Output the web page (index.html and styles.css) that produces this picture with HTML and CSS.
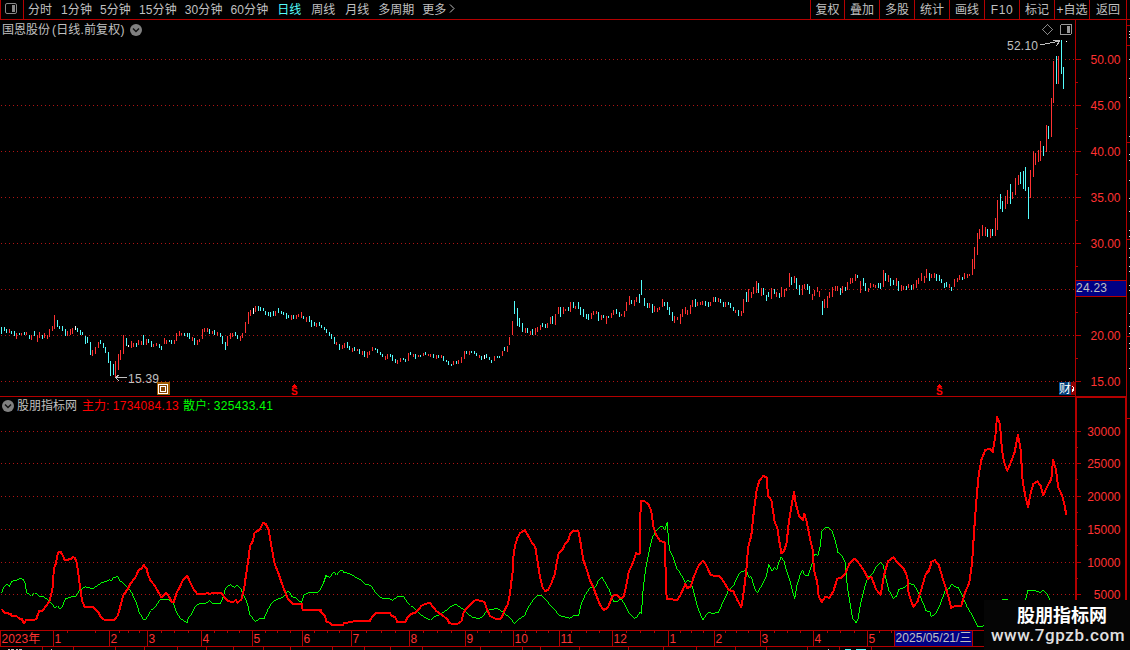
FILE: index.html
```html
<!DOCTYPE html>
<html lang="zh-CN">
<head>
  <meta charset="UTF-8" />
  <meta name="viewport" content="width=device-width, initial-scale=1" />
  <title>国恩股份 日线</title>
  <link rel="stylesheet" href="styles.css">
</head>
<body>
  <div class="toolbar">
    <div class="panel-toggle">
      <svg width="12" height="11" viewBox="0 0 12 11"><rect x=".5" y=".5" width="11" height="10" rx="1.5" fill="none" stroke="#888"/><rect x="7" y="2" width="3" height="7" fill="#888"/></svg>
    </div>
    <nav class="periods">
      <a>分时</a><a>1分钟</a><a>5分钟</a><a class="m15">15分钟</a><a>30分钟</a><a>60分钟</a><a class="active">日线</a><a class="week">周线</a><a class="month">月线</a><a>多周期</a><a>更多</a>
      <svg class="more" width="6" height="9" viewBox="0 0 6 9"><path d="M1 .5 L5 4.5 L1 8.5" fill="none" stroke="#c0c0c0"/></svg>
    </nav>
    <nav class="actions">
      <a>复权</a><a>叠加</a><a>多股</a><a>统计</a><a>画线</a><a class="f10">F10</a><a>标记</a><a>+自选</a><a class="back">返回</a>
    </nav>
  </div>

  <div class="pane price">
    <svg class="plot" width="1075" height="377" viewBox="0 20 1075 377">
      <g class="grid" id="priceGrid"></g>
      <path id="up" class="up" />
      <path id="down" class="down" />
      <path id="flat" class="flat" />

      <!-- high / low markers -->
      <text class="mark" x="1007" y="50" textLength="31">52.10</text>
      <path class="arrow" d="M1040 45 L1050 43 L1060 41 M1053 40 L1060 41 L1056 46" />
      <rect x="1066" y="41" width="1" height="1" fill="#fff" />
      <text class="mark" x="128" y="383" textLength="31">15.39</text>
      <path class="arrow" d="M127 377.5 H116 M119 375 L115.500 377.500 L119 381" />

      <!-- corner buttons -->
      <path d="M1042.500 29.500 L1047.500 24.500 L1052.500 29.500 L1047.500 34.500 Z" fill="none" stroke="#888" />
      <rect x="1060.500" y="24.500" width="11" height="10" rx="1.500" fill="none" stroke="#999" />
      <rect x="1067" y="26" width="3" height="7" fill="#999" />

      <!-- event marks -->
      <rect x="157" y="382" width="13" height="13" fill="#a05a00" />
      <rect x="158.500" y="384.500" width="9" height="9" fill="#844200" stroke="#fff" />
      <rect x="160.500" y="386.500" width="5" height="5" fill="none" stroke="#fff" />
      <g class="dividend">
        <path d="M292 387 h5 v-1 h-1 v-1 h-1 v-1 h-1 v1 h-1 v1 h-1z" />
        <text x="291" y="395">S</text>
        <path d="M937 387 h5 v-1 h-1 v-1 h-1 v-1 h-1 v1 h-1 v1 h-1z" />
        <text x="936" y="395">S</text>
      </g>
      <rect x="1059" y="382" width="12" height="13" fill="#003c78" />
      <rect x="1071" y="382" width="4" height="13" fill="#8c0000" />
      <text class="tag" x="1059" y="393">财</text>
      <path d="M1072 386 l2 2 l-2 2 M1074 389 l-2 3" fill="none" stroke="#fff" />
      <rect class="line" x="0" y="396" width="1075" height="1" />
    </svg>
    <svg class="axis" width="55" height="377" viewBox="1075 20 55 377">
      <g class="line" id="priceTicks">
        <rect x="1075" y="20" width="1" height="377" />
        <rect x="1126" y="20" width="1" height="377" />
        <rect x="1075" y="396" width="52" height="1" />
      </g>
      <g class="ylabels" id="priceLabels"></g>
      <rect x="1076" y="280" width="50" height="17" fill="#000084" />
      <rect class="line" x="1075" y="280" width="52" height="1" />
      <rect class="line" x="1075" y="296" width="52" height="1" />
      <text class="current" x="1076" y="292" textLength="31">24.23</text>
    </svg>
    <div class="caption title">
      <span>国恩股份</span><span class="sub">(日线.前复权)</span>
      <svg width="12" height="12" viewBox="0 0 12 12"><circle cx="6" cy="6" r="6" fill="#808080"/><path d="M3 4.500 L6 7.500 L9 4.500" fill="none" stroke="#111" stroke-width="1.500"/></svg>
    </div>
  </div>

  <div class="pane volume">
    <svg class="plot" width="1075" height="233" viewBox="0 397 1075 233">
      <g class="grid" id="flowGrid"></g>
      <g class="retail">
        <path transform="translate(0 510) scale(.33333)" d="M4 250L10 235L20 222L28 230L36 214L50 210L62 205L70 208L76 222L79 246L94 259L104 248L118 258L132 260L145 272L155 280L164 293L172 287L180 296L188 288L196 267L210 262L228 258L240 240L256 230L278 237L290 228L306 218L324 212L328 208L333 214L340 203L354 200L360 212L374 224L388 236L396 250L408 276L418 308L430 328L438 328L452 302L466 290L480 270L490 267L506 270L520 278L530 308L542 326L561 338L566 322L576 310L586 290L598 280L618 280L629 271L638 282L660 282L670 260L676 236L690 224L704 232L712 226L722 236L734 262L742 280L750 315L766 334L782 325L792 326L804 298L816 278L830 268L848 262L865 242L876 260L888 264L904 278L912 254L926 248L956 246L968 226L978 198L990 202" />
        <path transform="translate(320 510) scale(.33333)" d="M0 241L8 225L18 196L28 202L42 187L50 196L58 184L67 179L72 188L88 190L104 200L126 212L136 222L152 226L164 244L178 260L192 266L208 266L218 271L232 260L250 259L260 274L272 286L290 302L310 320L331 331L342 320L360 314L378 302L390 290L407 283L422 292L438 306L454 320L474 326L488 320L500 302L512 298L532 296L546 304L558 314L572 326L584 341L596 328L614 316L626 290L640 270L654 256L664 256L674 266L690 284L704 298L716 316L750 325L762 317L776 316L784 280L796 254L808 236L816 230L826 232L836 210L846 202L856 218L868 240L880 274L894 274L904 265L916 288L928 310L944 325L952 320L960 306L965 312" />
        <path transform="translate(600 460) scale(.33333)" d="M124 462L130 380L138 320L150 262L158 230L168 214L180 200L190 200L194 211L202 187L206 250L210 272L220 292L230 326L240 338L256 368L262 362L272 364L280 390L292 440L308 480L324 458L342 460L356 456L372 420L386 390L402 374L416 344L426 334L440 332L446 352L454 350L464 386L472 398L486 376L500 346L506 312L516 334L524 322L530 330L536 308L544 290L552 304L560 334L570 364L584 416L590 380L600 346L608 330L614 346L624 348L634 318L644 282L654 286L660 262L666 214L676 204L686 202L696 214L706 242L714 278L724 284L736 308L742 380L750 430L758 476L768 488L774 476L782 430L794 382L804 352L818 340L830 318L842 308L850 314L856 350L866 390L880 416L890 408L896 388L914 382L926 370L942 374L956 400L968 426L978 452L990 456" />
        <path transform="translate(860 400) scale(.33333)" d="M210 636L214 650L226 642L240 615L256 570L268 566L275 551L284 560L296 564L308 590L320 618L334 642L344 662L354 680L368 680L372 676M426 598H444M496 602L504 571L524 572L540 577L550 571L560 580L570 602" />
      </g>
      <g class="main-force">
        <path transform="translate(0 510) scale(.33333)" d="M4 296L14 308L32 312L36 318L48 317L58 326L66 328L72 340L78 330L105 329L110 324L117 304L128 302L140 285L148 274L155 248L158 232L160 200L162 176L168 160L171 140L176 126L182 126L188 136L195 151L203 150L206 146L214 147L218 140L224 144L229 152L235 190L240 230L246 272L254 290L278 291L296 308L302 320L314 330L342 330L354 316L362 285L370 256L384 236L392 220L406 202L416 180L424 176L431 165L440 176L444 194L452 212L462 224L474 244L484 262L499 249L510 265L515 276L521 277L530 248L540 230L548 212L562 198L570 216L582 240L592 252L616 252L622 248L628 252L640 248L662 248L668 254L676 266L686 274L700 276L707 270L713 278L724 268L732 238L738 195L745 150L750 108L758 94L764 68L778 60L790 38L798 43L806 60L812 96L824 162L834 186L844 216L856 248L864 268L878 282L906 282L908 300L960 300L966 302" />
        <path transform="translate(320 510) scale(.33333)" d="M-2 300L6 308L16 320L18 334L28 338L34 344L68 345L74 338L96 337L102 332L150 332L158 318L168 310L210 309L214 316L226 322L232 336L256 336L264 320L272 312L286 308L296 298L304 288L314 282L331 279L338 290L350 304L370 318L382 328L388 340L410 343L424 334L430 310L438 296L450 286L458 276L468 270L486 273L494 278L502 300L510 318L526 326L540 327L546 320L556 296L564 282L570 250L574 216L578 185L581 130L586 104L592 84L600 70L614 60L624 76L636 98L646 112L652 150L660 200L668 234L676 243L684 240L694 220L704 194L710 160L716 130L728 118L736 100L744 94L750 72L760 62L775 62L782 100L790 150L800 178L810 212L820 232L830 260L842 288L852 300L864 292L872 272L878 258L890 254L900 264L910 262L918 232L926 186L938 160L948 130L960 132" />
        <path transform="translate(600 460) scale(.33333)" d="M120 282L122 122L134 124L146 134L154 154L160 200L168 224L180 242L194 248L200 416L232 420L242 404L256 372L262 384L272 380L280 354L294 320L308 302L318 314L332 346L358 348L372 366L386 390L400 394L412 420L424 442L432 390L440 320L444 264L454 226L462 150L470 90L478 62L490 48L500 52L504 108L514 120L524 186L532 204L538 244L544 280L552 274L560 248L566 190L574 140L582 96L588 134L598 170L608 180L613 162L620 184L630 236L638 268L642 330L652 368L656 410L666 426L676 410L688 414L700 394L712 356L724 354L736 340L748 312L764 296L780 314L794 336L804 356L814 350L828 388L842 404L852 346L864 304L880 292L898 314L912 328L922 350L926 402L940 440L952 426L964 388L976 346L990 328" />
        <path transform="translate(860 400) scale(.33333)" d="M196 526L210 503L214 486L224 480L236 494L246 528L256 560L266 592L274 624L284 618L304 618L314 580L328 548L336 490L344 370L350 290L356 225L364 180L376 150L388 146L398 156L406 110L411 50L420 72L426 150L432 185L442 212L452 188L464 156L474 104L482 150L488 245L496 288L504 322L512 280L520 252L532 244L542 258L550 286L560 262L574 238L579 180L588 208L594 260L606 286L614 318L619 344" />
      </g>
    </svg>
    <svg class="axis" width="55" height="233" viewBox="1075 397 55 233">
      <g class="line" id="flowTicks">
        <rect x="1075" y="397" width="2" height="233" />
        <rect x="1125" y="397" width="2" height="233" />
        <rect x="1075" y="397" width="52" height="1" />
      </g>
      <g class="ylabels" id="flowLabels"></g>
    </svg>
    <div class="caption indicator">
      <svg width="12" height="12" viewBox="0 0 12 12"><circle cx="6" cy="6" r="6" fill="#808080"/><path d="M3 4.500 L6 7.500 L9 4.500" fill="none" stroke="#111" stroke-width="1.500"/></svg>
      <span class="name">股朋指标网</span>
      <span class="v1">主力: <b>1734084.13</b></span>
      <span class="v2">散户: <b>325433.41</b></span>
    </div>
  </div>

  <svg class="timeline" width="1130" height="20" viewBox="0 630 1130 20">
    <g class="line" id="timeTicks">
      <rect x="0" y="630" width="1075" height="1" />
      <rect x="0" y="646" width="1075" height="1" />
      <rect x="0" y="630" width="1" height="17" />
    </g>
    <rect x="895" y="631" width="77" height="15" fill="#000084" />
    <rect class="line" x="972" y="630" width="1" height="17" />
    <g class="months" id="months"></g>
    <text class="current" x="895.500" y="642" textLength="76">2025/05/21/三</text>
    <path d="M8 649.500h2M11 649.500h3M16 649.500h2M19 649.500h3M51 649.500h1M828 649.500h1" stroke="#c0c0c0" />
    <path d="M845 649.500h6M856 649.500h10" stroke="#54fcfc" />
  </svg>

  <div class="watermark">
    <strong>股朋指标网</strong>
    <span>www.7gpzb.com</span>
  </div>

  <script src="chart.js"></script>
</body>
</html>
```
FILE: styles.css
```css
body {
  position: relative;
  width: 1130px;
  height: 650px;
  margin: 0;
  overflow: hidden;
  background-color: #000;
  color: #c0c0c0;
  font-family: "Liberation Sans", "Noto Sans CJK SC", sans-serif;
  font-size: 12px;
  line-height: 14px;
}
svg {
  display: block;
  flex: none;
  font-family: "Liberation Sans", "Noto Sans CJK SC", sans-serif;
}
.toolbar {
  display: flex;
  height: 19px;
  border-bottom: 1px solid #b40000;
  white-space: nowrap;
}
.panel-toggle {
  box-sizing: border-box;
  width: 24px;
  padding: 3px 0 0 4px;
  border-left: 1px solid #b40000;
  border-right: 1px solid #b40000;
}
.periods {
  display: flex;
  padding: 3px 0 0 4px;
  gap: 8px;
}
.periods a:nth-child(n+2):nth-child(-n+6) {
  letter-spacing: 0.1px;
}
.periods a:first-child {
  margin-right: 1px;
}
.periods .active {
  margin-left: 1px;
  color: #54fcfc;
}
.periods .active,
.periods .week {
  margin-right: 2px;
}
.periods .month {
  margin-right: 1px;
}
.periods .more {
  margin: 1px 0 0 -5px;
}
.actions {
  display: flex;
  margin-left: auto;
  padding-right: 3px;
}
.actions a {
  box-sizing: border-box;
  width: 35px;
  padding-top: 3px;
  border-left: 1px solid #b40000;
  text-align: center;
}
.actions a:first-child {
  width: 34px;
}
.actions .f10 {
  letter-spacing: 0.6px;
}
.actions .back {
  width: 38px;
  border-right: 1px solid #b40000;
}
.pane {
  position: relative;
  display: flex;
}
.price {
  height: 377px;
}
.volume {
  height: 233px;
}
.plot,
.axis {
  shape-rendering: crispEdges;
}
.timeline {
  shape-rendering: crispEdges;
}
.caption {
  position: absolute;
  display: flex;
  align-items: center;
  white-space: nowrap;
}
.caption b {
  font-weight: normal;
}
.caption svg {
  shape-rendering: auto;
}
.title {
  left: 2px;
  top: 3px;
}
.title svg {
  margin-top: -1px;
}
.title .sub {
  margin: 0 5px 0 2px;
  letter-spacing: 0.15px;
}
.indicator {
  left: 2px;
  top: 2px;
}
.indicator svg {
  margin-top: -1px;
}
.indicator .name {
  margin: 0 5px 0 3px;
}
.indicator b {
  letter-spacing: 0.3px;
}
.v1 {
  margin-right: 4px;
  color: #ff0000;
}
.v2 {
  color: #00ff00;
}
.grid {
  stroke: #b01414;
  stroke-dasharray: 1 3;
}
.line {
  fill: #b40000;
}
.up {
  fill: #ff3232;
}
.down {
  fill: #54fcfc;
}
.flat {
  fill: #ffffff;
}
.mark,
.current {
  fill: #c0c0c0;
  font-size: 12px;
}
.arrow {
  fill: none;
  stroke: #c0c0c0;
}
.dividend {
  fill: #ff0000;
  font-size: 10px;
  font-weight: bold;
}
.tag {
  fill: #ffffff;
  font-size: 12px;
}
.ylabels,
.months {
  fill: #ff3232;
  font-size: 12px;
}
.ylabels {
  text-anchor: end;
}
.retail {
  fill: none;
  stroke: #00ff00;
  stroke-width: 3;
}
.main-force {
  fill: none;
  stroke: #ff0000;
  stroke-width: 6;
  stroke-linejoin: round;
}
.watermark {
  position: absolute;
  right: 0;
  bottom: 0;
  display: flex;
  flex-direction: column;
  align-items: center;
  box-sizing: border-box;
  width: 146px;
  height: 50px;
  padding: 1px 0 0 2px;
  background-color: #050505;
  color: #ffffff;
}
.watermark strong {
  padding-left: 8px;
  font: bold 18px/26px "Noto Sans CJK SC", sans-serif;
}
.watermark span {
  color: #e0e0e0;
  font: 500 17px/16px Roboto, sans-serif;
  letter-spacing: 0.6px;
}
```
FILE: chart.js
```js
// x, type (r = up, c = down, w = flat), high pixel, low pixel
const candles = `
1c327-334 4c327-331 6c329-333 9r329-333 11c331-334 14c331-336 16r333-339 19c333-335 21r333-335 24c332-335 26r332-335 29c335-339
31r335-340 34c331-336 37r335-342 39r332-338 42c335-339 44r333-338 47r335-339 49r329-337 52r326-331 54r315-329 57c320-327 59c326-329
62c326-331 65c329-336 67r331-336 70r329-335 72r328-334 75w326-330 77c328-332 80c330-335 82c332-335 85c336-344 87c337-343 90c342-355
92r350-356 95r347-354 98r342-348 100c340-344 103c343-348 105c347-353 108c352-363 110c361-376 113c364-375 115r361-378 118r354-370
120r350-360 123r335-354 126c338-346 128w345-347 131r341-348 133r343-347 136c343-347 138r340-345 141r341-345 143c335-345 146r339-345
148c339-343 151c341-347 153r344-347 156r343-346 159c344-348 161c346-350 164r338-344 166r340-344 169c340-342 171c340-344 174r340-344
176r333-341 179r331-336 181r333-335 184c333-336 187c333-337 189c333-339 192r337-341 194c338-345 197r340-345 199r339-342 202r329-339
204r328-332 207r328-332 209c329-334 212r331-334 214c330-335 217r332-336 220c333-337 222c336-344 225c342-350 227r336-346 230r333-339
232r333-337 235c332-336 237c335-339 240r336-341 242r333-338 245r322-333 248r312-324 250r310-316 253w308-314 255r306-312 258c306-311
260c307-311 263c308-311 265c311-315 268c312-316 270c312-317 273c311-316 275r311-316 278c308-313 281c311-314 283c312-315 286c313-319
288c315-318 291r315-320 293c315-319 296r315-319 298r314-317 301r312-318 303c316-319 306r317-322 309c316-322 311c320-327 314c322-326
316r323-327 319c322-326 321c325-328 324c327-330 326c329-333 329c332-336 331c334-339 334c337-344 336r342-345 339c344-350 342r345-349
344r343-348 347c342-348 349c346-350 352r348-352 354c347-351 357r349-351 359c349-354 362r351-355 364c351-357 367r352-358 369r351-355
372r347-351 375c348-350 377c349-353 380c352-355 382c354-357 385r356-360 387r354-359 390c354-357 392c355-361 395c359-363 397r360-364
400r358-362 403c358-360 405c359-362 408r353-361 410c352-355 413r354-357 415c354-359 418r355-357 420c355-357 423r353-356 425c352-355
428r354-356 430r354-357 433c354-358 436r355-359 438c355-358 441r355-358 443c356-361 446c360-362 448c361-365 451c364-366 453r361-365
456c361-364 458r360-364 461r357-363 464r351-359 466c351-354 469r351-355 471c351-353 474c351-354 476c353-356 479r355-358 481c356-360
484w355-359 486c354-358 489c357-360 491c360-363 494r356-361 497c356-358 499c356-358 502r351-356 504c347-351 507r346-352 509r337-345
512r321-335 514c301-314 517c308-326 519c318-327 522c323-332 525r328-333 527c328-333 530r331-335 532c329-335 535r328-335 537r327-332
540r325-330 542c323-327 545c324-328 547r323-328 550r317-324 552c316-324 555r314-325 558r307-314 560c307-317 563r307-314 565r309-311
568c307-311 570r302-312 573c302-308 575r306-309 578c302-309 580c307-315 583c309-317 586c314-319 588c314-320 591r313-319 593r311-315
596r311-314 598c312-321 601r315-320 603c315-318 606r316-324 608c316-318 611r313-318 613r310-315 616c309-314 619c312-317 621r314-316
624r311-317 626r302-311 629r296-305 631c300-304 634r300-306 636r297-302 639c294-303 641c280-295 644c298-306 647c303-308 649r303-308
652c304-313 654r306-312 657r308-312 659r307-310 662r299-307 664c302-306 667c302-310 669c307-315 672c312-321 674r316-323 677r317-320
680r314-324 682r309-317 685r307-314 687r310-315 690r305-314 692r300-307 695c299-307 697r302-306 700r302-305 702r301-305 705c301-306
708c302-307 710r302-306 713r297-302 715c297-302 718r298-302 720c299-303 723c302-307 725r302-307 728c302-305 730c303-308 733c307-311
735r310-313 738c310-316 741r311-316 743r299-313 746c292-302 748r289-302 751r292-298 753r287-294 756r281-293 758c283-293 761r288-296
763c288-295 766c295-301 768c292-297 771r288-299 774c289-294 776r292-297 779c293-298 781r287-297 784r289-297 786r288-291 789r273-287
791c277-285 794r276-283 796c278-289 799c285-295 802r285-295 804r284-289 807c284-290 809c286-294 812r294-300 814r290-296 817r287-292
819r291-297 822c301-315 824r299-308 827r296-308 829r292-298 832r287-297 835r286-291 837r286-291 840c288-295 842r286-293 845c287-291
847r282-290 850r278-284 852r278-283 855r274-281 857c275-278 860r281-293 863c278-286 865c283-291 868r288-292 870r283-288 873r284-287
875r285-288 878c283-288 880c283-289 883r270-287 885c273-281 888r275-282 890c278-286 893c280-285 896r278-286 898c281-291 901r285-291
903r286-290 906c286-290 908r284-288 911c285-290 913r284-289 916r280-288 918r278-284 921r273-281 924r276-283 926r269-278 929c273-281
931r274-278 934r273-278 936c274-281 939c275-281 941c279-283 944c283-288 946c282-287 949r284-288 951c287-291 954r279-287 957r278-282
959r275-280 962c277-280 964r273-279 967r274-278 969r274-276 972r259-275 974r247-269 977r233-255 979r229-239 982r225-236 985r227-236
987c229-237 990r229-238 992c229-236 995r218-236 997r200-230 1000c194-209 1002c201-212 1005r196-209 1007r190-204 1010c184-204
1012r192-199 1015r178-195 1018r175-185 1020c172-184 1023c171-189 1025c167-191 1028c187-219 1030r170-198 1033r151-177 1035r153-165
1038r150-162 1040r141-161 1043c146-156 1046r125-152 1048c126-139 1051r98-137 1053r61-103 1056c56-84 1058r56-84 1061c40-74 1063c67-89`;

const paths = { r: "", c: "", w: "" };
candles.trim().split(/\s+/).forEach(item => {
  const [, x, type, high, low] = item.match(/(\d+)([rcw])(\d+)-(\d+)/);
  paths[type] += `M${x} ${high}h1V${low}h-1z`;
});
document.getElementById("up").setAttribute("d", paths.r);
document.getElementById("down").setAttribute("d", paths.c);
document.getElementById("flat").setAttribute("d", paths.w);

function add(id, markup) {
  document.getElementById(id).innerHTML += markup;
}

const rect = (x, y, w, h) => `<rect x="${x}" y="${y}" width="${w}" height="${h}" />`;

// Price scale
[50, 45, 40, 35, 30, 25, 20, 15].forEach((value, i) => {
  const y = 59 + i * 46;
  add("priceGrid", `<path d="M1 ${y + 0.5}H1075" />`);
  add("priceTicks", rect(1076, y, 5, 1));
  if (i < 7) add("priceTicks", rect(1076, y + 23, 2, 1));
  if (value !== 25) add("priceLabels", `<text x="1120.500" y="${y + 5}">${value}.00</text>`);
});

// Indicator scale
[[30000, 431], [25000, 463], [20000, 496], [15000, 529], [10000, 562], [5000, 594]].forEach(([value, y]) => {
  add("flowGrid", `<path d="M1 ${y + 0.5}H1075" />`);
  add("flowTicks", rect(1077, y, 4, 1) + rect(1077, y + 16, 1, 1));
  add("flowLabels", `<text x="1120.500" y="${y + 5}">${value}</text>`);
});

// Edge of the neighbouring panel
[25, 45, 142, 239, 336].forEach(y => add("priceTicks", rect(1127, y, 3, 1)));
add("flowTicks", rect(1127, 418, 3, 1));
[31, 34, 37, 59, 78, 97, 136, 154, 160, 180, 198, 211, 230, 236, 248, 257, 266, 271, 285, 290, 313, 326, 333, 343, 348, 368].forEach(y => {
  add("priceTicks", `<rect x="1129" y="${y}" width="1" height="1" fill="#ddd" />`);
});

// Month axis
[[0, "2023年"], [53, 1], [109, 2], [147, 3], [201, 4], [252, 5], [302, 6], [351, 7], [409, 8], [465, 9], [513, 10],
 [559, 11], [612, 12], [668, 1], [714, 2], [760, 3], [813, 4], [867, 5], [894, ""]].forEach(([x, label]) => {
  add("timeTicks", rect(x, 630, 1, 17));
  if (label) add("months", `<text x="${x + 1.5}" y="643">${label}</text>`);
});
[67, 95, 119, 128, 139, 161, 174, 188, 214, 227, 239, 265, 277, 290, 314, 327, 339, 366, 381, 395, 423, 437, 451,
 477, 489, 501, 525, 536, 548, 571, 586, 599, 626, 640, 654, 680, 691, 703, 725, 736, 748, 774, 787, 800, 827, 840, 854, 879, 891].forEach(x => {
  add("timeTicks", rect(x, 631, 1, 2));
});
[42, 73, 115, 144, 177, 206, 233, 263, 290, 332, 364, 390, 422, 480, 522, 540, 579, 628, 663, 696, 735, 766, 807, 839, 871].forEach(x => {
  add("timeTicks", rect(x, 647, 1, 3));
});
```
